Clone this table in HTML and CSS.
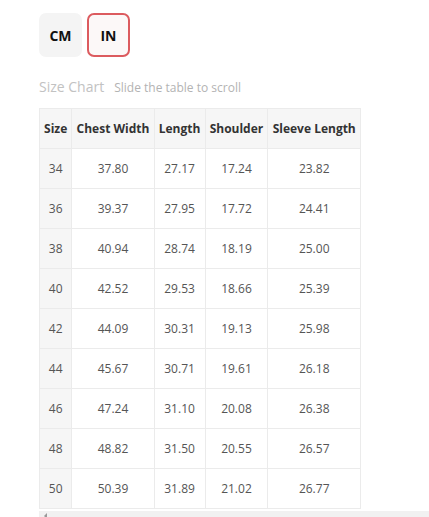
FILE: index.html
```html
<!DOCTYPE html>
<html>
<head>
<meta charset="utf-8">
<link rel="stylesheet" href="styles.css">
</head>
<body>
<div class="wrap">
  <div class="units">
    <button class="unit">CM</button>
    <button class="unit active">IN</button>
  </div>
  <div class="title"><span class="main">Size Chart</span><span class="sub">Slide the table to scroll</span></div>
  <div class="scroller">
    <table class="chart">
      <thead>
        <tr><th>Size</th><th>Chest Width</th><th>Length</th><th>Shoulder</th><th>Sleeve Length</th></tr>
      </thead>
      <tbody>
        <tr><td class="sz">34</td><td>37.80</td><td>27.17</td><td>17.24</td><td>23.82</td></tr>
        <tr><td class="sz">36</td><td>39.37</td><td>27.95</td><td>17.72</td><td>24.41</td></tr>
        <tr><td class="sz">38</td><td>40.94</td><td>28.74</td><td>18.19</td><td>25.00</td></tr>
        <tr><td class="sz">40</td><td>42.52</td><td>29.53</td><td>18.66</td><td>25.39</td></tr>
        <tr><td class="sz">42</td><td>44.09</td><td>30.31</td><td>19.13</td><td>25.98</td></tr>
        <tr><td class="sz">44</td><td>45.67</td><td>30.71</td><td>19.61</td><td>26.18</td></tr>
        <tr><td class="sz">46</td><td>47.24</td><td>31.10</td><td>20.08</td><td>26.38</td></tr>
        <tr><td class="sz">48</td><td>48.82</td><td>31.50</td><td>20.55</td><td>26.57</td></tr>
        <tr><td class="sz">50</td><td>50.39</td><td>31.89</td><td>21.02</td><td>26.77</td></tr>
      </tbody>
    </table>
    <div class="bar"><span class="arrow"></span></div>
  </div>
</div>
</body>
</html>
```
FILE: styles.css
```css
html, body { margin: 0; padding: 0; background: #fff; }
body { font-family: "Open Sans", "Liberation Sans", sans-serif; overflow: hidden; }
.wrap { padding: 13px 0 0 39px; }
.units { display: flex; gap: 5px; align-items: flex-start; }
.unit {
  font-family: "Open Sans", sans-serif;
  font-weight: 700; font-size: 14px; color: #111;
  width: 43px; height: 44px; border-radius: 7px;
  background: #f4f4f4; border: 2px solid #f4f4f4; padding: 0;
}
.active { background: #fcf8f8; border-color: #dc5b5f; }
.title { margin-top: 20px; display: flex; align-items: baseline; gap: 10px; height: 30px; }
.main { font-size: 14px; color: #c2c2c2; }
.sub { font-size: 12px; color: #b3b3b3; }
.scroller { margin-top: 1px; }
.chart { border-collapse: collapse; font-size: 12px; color: #555; width: 322px; }
.chart th, .chart td { border: 1px solid #ebebeb; text-align: center; height: 39px; padding: 0 4px; }
.chart th { background: #f6f6f6; color: #333; font-weight: 700; font-size: 12px; white-space: nowrap; }
.chart td.sz { background: #f6f6f6; }
.bar { height: 8px; background: #f1f1f1; margin-top: 2px; position: relative; }
.arrow { position: absolute; left: 5px; top: 2px; width: 0; height: 0; border-top: 3px solid transparent; border-bottom: 3px solid transparent; border-right: 3px solid #999; }
```
